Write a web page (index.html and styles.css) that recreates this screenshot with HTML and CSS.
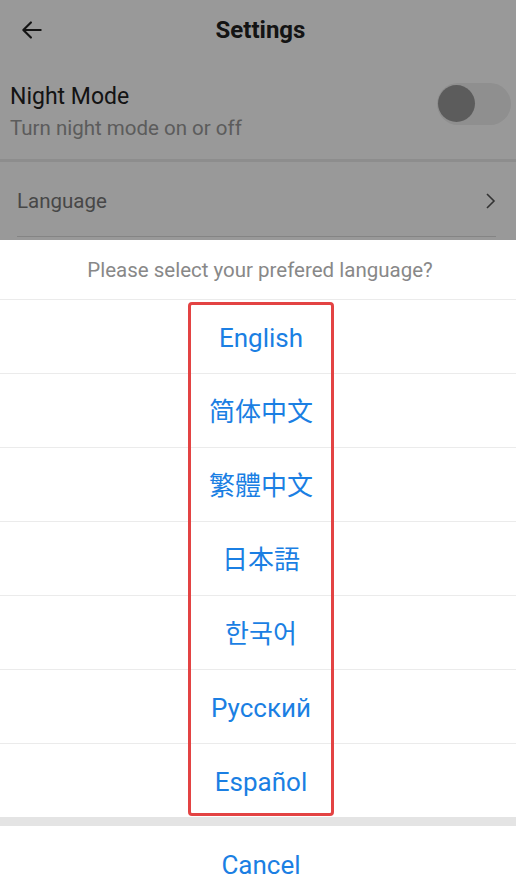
FILE: index.html
```html
<!DOCTYPE html>
<html lang="en">
<head>
    <meta charset="UTF-8">
    <meta name="viewport" content="width=device-width, initial-scale=1.0">
    <title>Settings</title>
    <link rel="stylesheet" href="styles.css">
</head>
<body>

    <!-- Pantalla de configuració -->
    <div class="page">
        <div class="topbar">
            <svg class="back" width="26" height="26" viewBox="0 0 24 24">
                <path d="M20 12H4.5M11 5l-7 7 7 7" fill="none" stroke="#222" stroke-width="2" stroke-linecap="round" stroke-linejoin="round"/>
            </svg>
            <h1>Settings</h1>
        </div>

        <div class="row-night">
            <div>
                <div class="night-title">Night Mode</div>
                <div class="night-sub">Turn night mode on or off</div>
            </div>
            <div class="toggle"><div class="knob"></div></div>
        </div>

        <div class="row-lang">
            <span>Language</span>
            <svg width="12" height="20" viewBox="0 0 12 20">
                <path d="M3 3l7 7-7 7" fill="none" stroke="#555" stroke-width="1.6"/>
            </svg>
        </div>
    </div>

    <div class="overlay"></div>

    <!-- Full d'accions per triar l'idioma -->
    <div class="sheet">
        <div class="sheet-title">Please select your prefered language?</div>
        <ul class="options">
            <li>English</li>
            <li lang="zh-Hans">简体中文</li>
            <li lang="zh-Hant">繁體中文</li>
            <li lang="ja">日本語</li>
            <li lang="ko">한국어</li>
            <li lang="ru">Русский</li>
            <li lang="es">Español</li>
        </ul>
        <div class="gap"></div>
        <div class="cancel">Cancel</div>
    </div>

    <div class="highlight"></div>

</body>
</html>
```

FILE: styles.css
```css
body {
    margin: 0;
    font-family: Roboto, "Noto Sans", sans-serif;
    background: #fff;
    height: 896px;
    overflow: hidden;
}
.topbar {
    height: 60px;
    display: flex;
    align-items: center;
    justify-content: center;
    position: relative;
}
.topbar h1 {
    margin: 0;
    font-size: 24px;
    font-weight: bold;
    color: #222;
    margin-left: 5px;
}
.back {
    position: absolute;
    left: 19px;
    top: 17px;
}
.row-night {
    padding: 0 5px 0 10px;
    display: flex;
    align-items: center;
    justify-content: space-between;
    border-bottom: 3px solid #ececec;
    box-sizing: border-box;
    height: 102px;
}
.night-title {
    font-size: 23px;
    color: #222;
    margin-top: 4px;
}
.night-sub {
    font-size: 20.5px;
    color: #999;
    margin-top: 6px;
}
.toggle {
    width: 73px;
    height: 42px;
    border-radius: 21px;
    background: #eee;
    display: flex;
    align-items: center;
    padding-left: 1px;
    margin-bottom: 12px;
}
.knob {
    width: 37px;
    height: 37px;
    border-radius: 50%;
    background: #9a9a9a;
}
.row-lang {
    height: 75px;
    margin: 0 20px 0 17px;
    padding-top: 3px;
    box-sizing: border-box;
    display: flex;
    align-items: center;
    justify-content: space-between;
    border-bottom: 1px solid #dcdcdc;
    font-size: 20.5px;
    color: #777;
}
.overlay {
    position: fixed;
    top: 0;
    left: 0;
    right: 0;
    bottom: 0;
    background: rgba(0, 0, 0, 0.4);
}
.sheet {
    position: fixed;
    top: 240px;
    left: 0;
    right: 0;
    background: #fff;
    text-align: center;
}
.sheet-title {
    height: 59px;
    line-height: 60px;
    font-size: 20.5px;
    color: #888;
    padding-left: 4px;
}
.options {
    list-style: none;
    margin: 0;
    padding: 0;
}
.options li, .cancel {
    height: 74px;
    line-height: 76px;
    font-size: 26px;
    color: #1b7fe3;
    border-top: 1px solid #ebebeb;
    box-sizing: border-box;
    padding-left: 6px;
}
.options li:lang(zh-Hans) { font-family: Roboto, "Noto Sans CJK SC", sans-serif; }
.options li:lang(zh-Hant) { font-family: Roboto, "Noto Sans CJK TC", sans-serif; }
.options li:lang(ja) { font-family: Roboto, "Noto Sans CJK JP", sans-serif; }
.options li:lang(ko) { font-family: Roboto, "Noto Sans CJK KR", sans-serif; }
.gap {
    height: 9px;
    background: #e4e4e4;
}
.cancel {
    border-top: none;
    line-height: 78px;
}
.highlight {
    position: fixed;
    left: 188px;
    top: 302px;
    width: 146px;
    height: 514px;
    border: 3px solid #e34343;
    border-radius: 4px;
    box-sizing: border-box;
}
```
